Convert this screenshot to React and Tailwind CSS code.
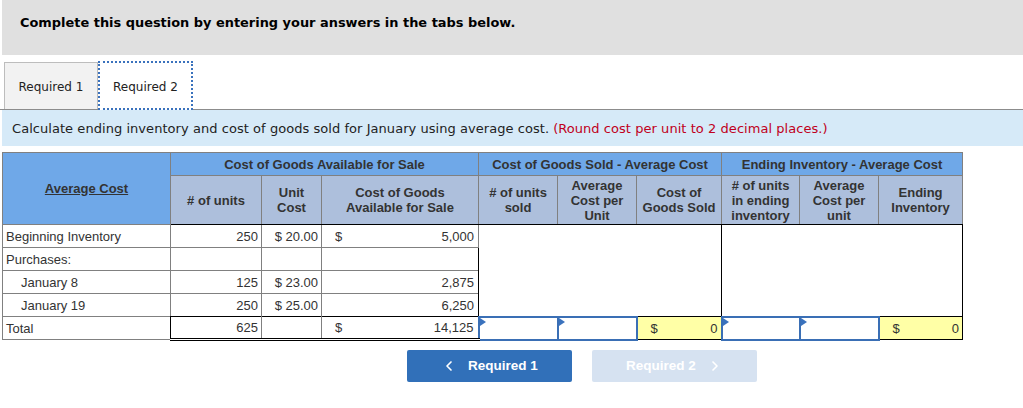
import { ChevronLeft, ChevronRight } from 'lucide-react'

const rows = [
  { label: 'Beginning Inventory', units: '250', cost: '$ 20.00', dollar: true, total: '5,000' },
  { label: 'Purchases:', units: '', cost: '', total: '' },
  { label: 'January 8', indent: true, units: '125', cost: '$ 23.00', total: '2,875' },
  { label: 'January 19', indent: true, units: '250', cost: '$ 25.00', total: '6,250' },
]

const headCell = 'border border-[#808080] border-b-black bg-[#adbfdc] p-0 text-center align-middle font-bold leading-[15px] text-[#333]'
const topCell = 'border border-[#808080] border-l-black bg-[#6fa8e8] p-0 pt-px text-center align-middle font-bold text-[#333]'
const bodyCell = 'border border-[#808080] p-0 px-[3px] pt-px text-right align-middle'
const doubleCell = 'border border-[#808080] border-t-black border-b-[3px] border-b-black border-double p-0 px-[3px] pt-px text-right align-middle'

function InputCell() {
  return (
    <td className="relative border-2 border-[#3a6fb5] bg-white p-0">
      <span className="absolute left-0 top-0 h-0 w-0 border-y-[4px] border-l-[6px] border-y-transparent border-l-[#3a72bd]" />
    </td>
  )
}

function TotalCell() {
  return (
    <td className="border border-black bg-[#ffffa6] p-0 px-[3px] pt-px align-middle">
      <div className="flex justify-between pl-[10px]">
        <span>$</span>
        <span>0</span>
      </div>
    </td>
  )
}

export default function App() {
  return (
    <div className="h-[408px] w-[1023px] overflow-hidden bg-white font-['DejaVu_Sans',sans-serif]">
      <div className="ml-[2px] flex h-[55px] items-start bg-[#e0e0e0] pl-[18px] pt-[15px] text-[12.93px] font-bold leading-4 text-black">
        Complete this question by entering your answers in the tabs below.
      </div>

      <div className="flex h-[55px] items-end border-b border-[#8c8c8c] pl-[4px] text-[12px] text-[#222]">
        <div className="flex h-[47px] w-[94px] items-center justify-center border border-b-0 border-[#bdbdbd] bg-[#f2f2f2] pt-[2px]">
          Required 1
        </div>
        <div className="-mb-px flex h-[49px] w-[95px] items-center justify-center border-2 border-dotted border-[#3a72bd] bg-white pt-[2px]">
          Required 2
        </div>
      </div>

      <div className="ml-[2px] flex h-[36px] items-center bg-[#d6eaf8] pl-[10px] pt-[2px] text-[13px] tracking-[0.05px] text-[#222]">
        Calculate ending inventory and cost of goods sold for January using average cost.
        <span className="ml-[4px] text-[#c00020]">(Round cost per unit to 2 decimal places.)</span>
      </div>

      <table className="ml-[2px] mt-[6px] w-[960px] table-fixed border-collapse border border-[#808080] font-['Liberation_Sans',sans-serif] text-[13px] text-[#333]">
        <colgroup>
          <col className="w-[168px]" />
          <col className="w-[91px]" />
          <col className="w-[60px]" />
          <col className="w-[157px]" />
          <col className="w-[79px]" />
          <col className="w-[79px]" />
          <col className="w-[85px]" />
          <col className="w-[78px]" />
          <col className="w-[79px]" />
          <col className="w-[84px]" />
        </colgroup>
        <thead>
          <tr className="h-[23px]">
            <th rowSpan={2} className="border border-[#808080] bg-[#6fa8e8] p-0 text-center align-middle font-bold text-[#333] underline">
              Average Cost
            </th>
            <th colSpan={3} className={topCell}>Cost of Goods Available for Sale</th>
            <th colSpan={3} className={topCell}>Cost of Goods Sold - Average Cost</th>
            <th colSpan={3} className={topCell}>Ending Inventory - Average Cost</th>
          </tr>
          <tr className="h-[49px]">
            <th className={`${headCell} border-l-black`}># of units</th>
            <th className={headCell}>Unit<br />Cost</th>
            <th className={headCell}>Cost of Goods<br />Available for Sale</th>
            <th className={`${headCell} border-l-black`}># of units<br />sold</th>
            <th className={headCell}>Average<br />Cost per<br />Unit</th>
            <th className={headCell}>Cost of<br />Goods Sold</th>
            <th className={`${headCell} border-l-black`}># of units<br />in ending<br />inventory</th>
            <th className={headCell}>Average<br />Cost per<br />unit</th>
            <th className={headCell}>Ending<br />Inventory</th>
          </tr>
        </thead>
        <tbody>
          {rows.map((row, i) => (
            <tr key={row.label} className="h-[23px]">
              <td className={`border border-[#808080] p-0 pt-px align-middle ${row.indent ? 'pl-[18px]' : 'pl-[3px]'}`}>{row.label}</td>
              <td className={`${bodyCell} border-l-black`}>{row.units}</td>
              <td className={bodyCell}>{row.cost}</td>
              <td className={bodyCell}>
                <div className="flex justify-between pl-[10px] pr-px">
                  <span>{row.dollar ? '$' : ''}</span>
                  <span>{row.total}</span>
                </div>
              </td>
              {i === 0 && <td rowSpan={4} colSpan={3} className="border border-black bg-white p-0" />}
              {i === 0 && <td rowSpan={4} colSpan={3} className="border border-black bg-white p-0" />}
            </tr>
          ))}
          <tr className="h-[23px]">
            <td className="border border-[#808080] p-0 pl-[3px] pt-px align-middle">Total</td>
            <td className={`${doubleCell} border-l-black`}>625</td>
            <td className={doubleCell} />
            <td className={doubleCell}>
              <div className="flex justify-between pl-[10px] pr-px">
                <span>$</span>
                <span>14,125</span>
              </div>
            </td>
            <InputCell />
            <InputCell />
            <TotalCell />
            <InputCell />
            <InputCell />
            <TotalCell />
          </tr>
        </tbody>
      </table>

      <div className="ml-[407px] mt-[9px] flex gap-[20px] font-['Liberation_Sans',sans-serif] text-[13.5px] font-bold text-white">
        <div className="flex h-[32px] w-[165px] items-center justify-center rounded-[2px] bg-[#3170b9]">
          <ChevronLeft size={16} strokeWidth={2.5} className="mr-[11px]" />
          Required 1
        </div>
        <div className="flex h-[32px] w-[165px] items-center justify-center rounded-[2px] bg-[#d6e2f1]">
          Required 2
          <ChevronRight size={16} strokeWidth={2.5} className="ml-[11px]" />
        </div>
      </div>
    </div>
  )
}
